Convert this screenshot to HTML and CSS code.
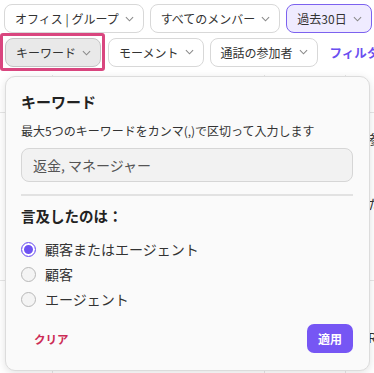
FILE: index.html
```html
<!DOCTYPE html>
<html lang="ja">
<head>
<meta charset="utf-8">
<link rel="stylesheet" href="styles.css">
</head>
<body>
<div class="toolbar">
  <div class="row row1">
    <button class="chip">オフィス | グループ <svg class="chev" viewBox="0 0 10 6"><path d="M1 1l4 4 4-4"/></svg></button>
    <button class="chip">すべてのメンバー <svg class="chev" viewBox="0 0 10 6"><path d="M1 1l4 4 4-4"/></svg></button>
    <button class="chip chip-active">過去30日 <svg class="chev" viewBox="0 0 10 6"><path d="M1 1l4 4 4-4"/></svg></button>
    <button class="chip">その他</button>
  </div>
  <div class="row row2">
    <span class="focus-ring"><button class="chip chip-open">キーワード <svg class="chev" viewBox="0 0 10 6"><path d="M1 1l4 4 4-4"/></svg></button></span>
    <button class="chip">モーメント <svg class="chev" viewBox="0 0 10 6"><path d="M1 1l4 4 4-4"/></svg></button>
    <button class="chip">通話の参加者 <svg class="chev" viewBox="0 0 10 6"><path d="M1 1l4 4 4-4"/></svg></button>
    <span class="filter-link">フィルターを追加</span>
  </div>
</div>

<div class="table">
  <div class="trow trow-a"><div class="c c1"></div><div class="c c2"></div><div class="c c3"></div><div class="c c4"></div></div>
  <div class="trow trow-b"><div class="c c1"></div><div class="c c2"></div><div class="c c3"></div><div class="c c4"><span class="frag f1">参加</span><span class="frag f2">た</span></div></div>
  <div class="trow trow-c"><div class="c c1"></div><div class="c c2"></div><div class="c c3"></div><div class="c c4"><span class="frag f3">Ro</span></div></div>
</div>

<div class="popover">
  <h2 class="pop-title">キーワード</h2>
  <p class="pop-desc">最大5つのキーワードをカンマ(,)で区切って入力します</p>
  <div class="input">返金, マネージャー</div>
  <hr class="divider">
  <h3 class="sub-title">言及したのは：</h3>
  <div class="radios">
    <label class="radio"><span class="dot dot-on"></span>顧客またはエージェント</label>
    <label class="radio"><span class="dot"></span>顧客</label>
    <label class="radio"><span class="dot"></span>エージェント</label>
  </div>
  <div class="footer">
    <span class="clear">クリア</span>
    <button class="apply">適用</button>
  </div>
</div>
</body>
</html>
```
FILE: styles.css
```css
* { box-sizing: border-box; }
html, body { margin: 0; padding: 0; }
body {
  width: 374px;
  height: 373px;
  overflow: hidden;
  background: #ffffff;
  font-family: "Noto Sans CJK JP", "Noto Sans", sans-serif;
  color: #2b2b2b;
  position: relative;
}
.toolbar { padding: 4px 0 0 4px; }
.row { display: flex; gap: 6px; align-items: center; white-space: nowrap; }
.row2 { margin-top: 0; margin-left: -4px; gap: 6px; }
.chip {
  height: 29px;
  border: 1px solid #d8d8d8;
  border-radius: 8px;
  background: #ffffff;
  padding: 0 9px 0 10px;
  font-family: inherit;
  font-size: 12px;
  color: #333;
  display: flex;
  align-items: center;
  gap: 6px;
  flex-shrink: 0;
}
.chev { width: 9px; height: 6px; fill: none; stroke: #8a8a8a; stroke-width: 1.2; }
.chip-active { background: #efebff; border-color: #7c62ef; }
.focus-ring {
  display: flex;
  border: 3px solid #d9467f;
  border-radius: 3px;
  padding: 2px 1px 1px 2px;
  margin-right: -3px;
  flex-shrink: 0;
}
.chip-open { background: #e9e9e9; border-color: #c4c4c4; }
.filter-link { color: #6a4ff0; font-weight: 700; font-size: 12.5px; margin-left: 6px; }

.table { margin-top: 4px; }
.trow { display: flex; border-bottom: 1px solid #e6e6e6; }
.trow-a { height: 38px; }
.trow-b { height: 168px; }
.trow-c { height: 120px; }
.c { border-right: 1px solid #e6e6e6; position: relative; overflow: hidden; }
.c1 { width: 53px; }
.c2 { width: 212px; }
.c3 { width: 81px; }
.c4 { flex: 1; border-right: none; }
.frag { position: absolute; left: 22px; font-size: 13px; color: #333; white-space: nowrap; }
.f1 { top: 16px; }
.f2 { top: 81px; }
.f3 { top: 47px; }

.popover {
  position: absolute;
  left: 5px;
  top: 76px;
  width: 365px;
  height: 295px;
  background: #fafafa;
  border: 1px solid #dcdcdc;
  border-radius: 10px;
  box-shadow: 0 2px 8px rgba(0,0,0,0.12);
  padding: 14px 16px 0 15px;
}
.pop-title { margin: 0; font-size: 15px; font-weight: 700; line-height: 22px; color: #222; }
.pop-desc { margin: 9px 0 0; font-size: 12px; line-height: 18px; color: #333; }
.input {
  margin-top: 8px;
  height: 34px;
  border: 1px solid #d6d6d6;
  border-radius: 8px;
  background: #f2f2f2;
  padding: 0 11px;
  display: flex;
  align-items: center;
  font-size: 14px;
  color: #555;
}
.divider { margin: 12px 0 0; border: none; height: 2px; background: #e2e2e2; }
.sub-title { margin: 10px 0 0; font-size: 14.5px; font-weight: 700; line-height: 20px; color: #222; }
.radios { margin-top: 13px; display: flex; flex-direction: column; gap: 5px; }
.radio { display: flex; align-items: center; gap: 9px; font-size: 14px; line-height: 20px; color: #333; }
.dot {
  width: 15px; height: 15px;
  border-radius: 50%;
  border: 1px solid #b8b8b8;
  background: #f4f4f4;
  flex-shrink: 0;
}
.dot-on {
  border: 1.5px solid #6e52f2;
  background: #ffffff;
  box-shadow: inset 0 0 0 2px #ffffff, inset 0 0 0 8px #6e52f2;
}
.footer {
  margin-top: 15px;
  display: flex;
  align-items: center;
  justify-content: space-between;
  padding-left: 13px;
}
.clear { font-size: 11.5px; font-weight: 700; color: #cc2b55; }
.apply {
  width: 46px; height: 29px;
  border: none;
  border-radius: 7px;
  background: #7656f4;
  color: #ffffff;
  font-family: inherit;
  font-size: 12px;
  font-weight: 700;
}
```
